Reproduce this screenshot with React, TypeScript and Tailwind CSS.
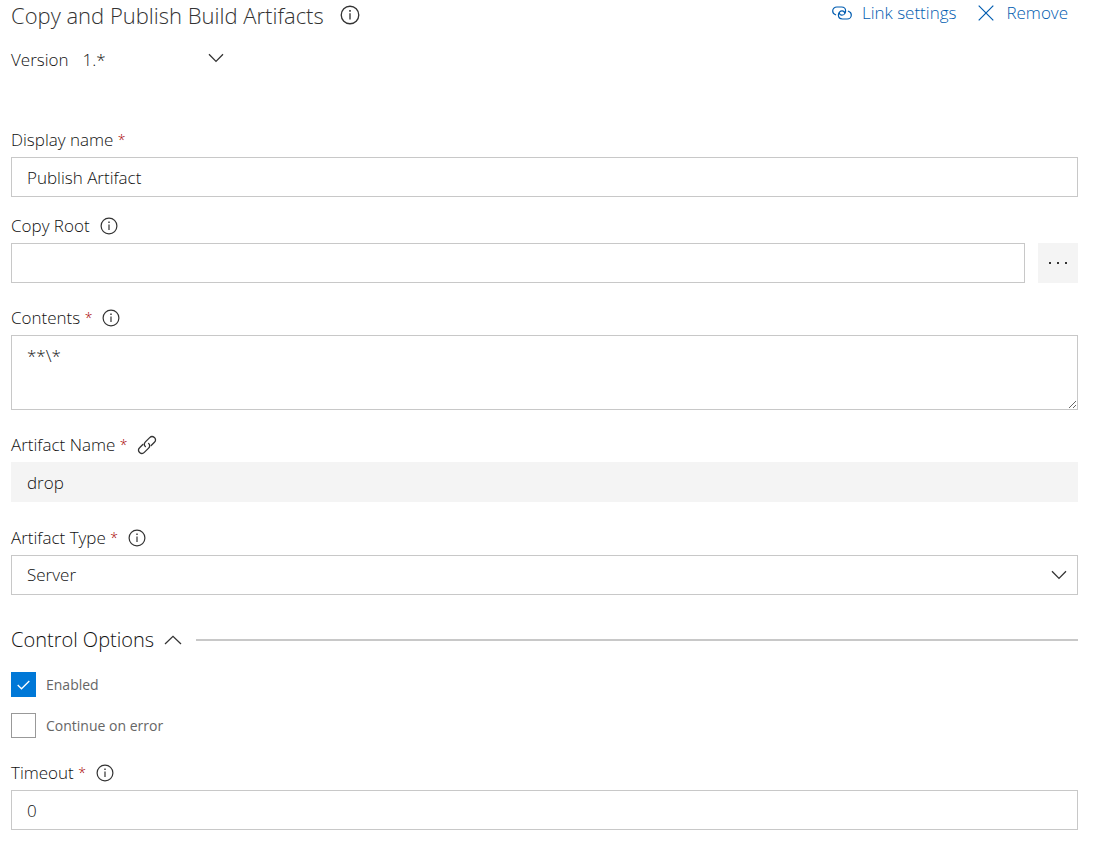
import type { ReactNode } from 'react'

const FIELD = 'block w-full h-10 border border-[#c8c8c8] bg-white px-[15px] text-[17px] leading-6 text-[#111111] outline-none focus:border-[#0078d4]'

function InfoIcon({ size = 18 }: { size?: number }) {
  return (
    <svg width={size} height={size} viewBox="0 0 18 18" fill="none" stroke="#333333" aria-hidden="true">
      <circle cx="9" cy="9" r="7.9" strokeWidth="1.2" />
      <path d="M9 7.4v5.6" strokeWidth="1.2" />
      <path d="M9 4.6v1.5" strokeWidth="1.4" />
    </svg>
  )
}

function ChainIcon() {
  return (
    <svg width="20" height="20" viewBox="0 0 20 20" fill="none" stroke="#333333" strokeWidth="1.3" strokeLinecap="round" aria-hidden="true">
      <path d="M8.4 11.6c-1.6-1.6-1.3-3.4 0-4.7l4.3-4.3c1.5-1.5 3.3-1.3 4.7 0s1.6 3.2 0 4.7l-3.2 3.2" />
      <path d="M11.6 8.4c1.6 1.6 1.3 3.4 0 4.7l-4.3 4.3c-1.5 1.5-3.3 1.3-4.7 0s-1.6-3.2 0-4.7l3.2-3.2" />
    </svg>
  )
}

function LinkSettingsIcon() {
  return (
    <svg width="20" height="14" viewBox="0 0 20 14" fill="none" stroke="currentColor" strokeWidth="1.2" strokeLinecap="round" aria-hidden="true">
      <path d="M3.6 8.8C1.8 8.2.7 6.9.7 5.1.7 2.8 2.5 1 4.9 1h4.6c2.4 0 4.1 1.7 4.1 3.9s-1.7 4.2-3.7 4.2c-1.5 0-2.5-1-2.5-2.2" />
      <path d="M16.4 5.2c1.8.6 2.9 1.9 2.9 3.7 0 2.3-1.8 4.1-4.2 4.1h-4.6c-2.4 0-4.1-1.7-4.1-3.9s1.7-4.2 3.7-4.2c1.5 0 2.5 1 2.5 2.2" />
    </svg>
  )
}

function Chevron({ up = false }: { up?: boolean }) {
  return (
    <svg width="18" height="10" viewBox="0 0 18 10" fill="none" stroke="#333333" strokeWidth="1.3" aria-hidden="true">
      <path d={up ? 'M1 9l8-7.6L17 9' : 'M2 1.2l7 7.2 7-7.2'} />
    </svg>
  )
}

type FieldProps = {
  id: string
  label: string
  required?: boolean
  info?: boolean
  linked?: boolean
  className?: string
  children: ReactNode
}

function Field({ id, label, required, info, linked, className, children }: FieldProps) {
  return (
    <div className={className}>
      <div className="mb-[5px] flex h-6 items-center">
        <label htmlFor={id} className="text-[17px] leading-6">
          {label}
          {required && <> <span className="align-[1px] text-sm leading-none text-[#a80000]">*</span></>}
        </label>
        {info && (
          <button type="button" aria-label={`About ${label}`} className="ml-[10px]">
            <InfoIcon />
          </button>
        )}
        {linked && (
          <button type="button" aria-label={`${label} is linked`} className="ml-[10px]">
            <ChainIcon />
          </button>
        )}
      </div>
      {children}
    </div>
  )
}

function Checkbox({ label, defaultChecked }: { label: string; defaultChecked?: boolean }) {
  return (
    <label className="flex w-fit items-center gap-[10px] text-sm leading-6 font-normal text-[#666666]">
      <span className="grid">
        <input
          type="checkbox"
          defaultChecked={defaultChecked}
          className="peer col-start-1 row-start-1 size-[25px] appearance-none border border-[#999999] bg-white checked:border-[#0078d7] checked:bg-[#0078d7]"
        />
        <svg className="pointer-events-none invisible col-start-1 row-start-1 place-self-center peer-checked:visible" width="13" height="10" viewBox="0 0 13 10" fill="none" stroke="#ffffff" strokeWidth="1.3" aria-hidden="true">
          <path d="M.7 5l3.8 3.8L12.3 1" />
        </svg>
      </span>
      {label}
    </label>
  )
}

export default function App() {
  return (
    <main className="bg-white pb-5 pl-[11px] pr-[25px] font-['Open_Sans','Noto_Sans',sans-serif] font-light text-[#111111]">
      <header className="flex items-start justify-between">
        <div className="flex h-[30px] items-center gap-4">
          <h1 className="text-[22px] leading-[30px] text-[#333333]">Copy and Publish Build Artifacts</h1>
          <button type="button" aria-label="About this task">
            <InfoIcon size={20} />
          </button>
        </div>
        <div className="flex h-[26px] items-center gap-[22px] pr-[10px] text-[17px] leading-6 text-[#005cb0]">
          <a href="#link-settings" className="flex items-center gap-[10px]">
            <LinkSettingsIcon />
            Link settings
          </a>
          <button type="button" className="flex items-center gap-3">
            <svg width="16" height="16" viewBox="0 0 16 16" fill="none" stroke="currentColor" strokeWidth="1.2" aria-hidden="true">
              <path d="M.7.7l14.6 14.6M15.3.7L.7 15.3" />
            </svg>
            Remove
          </button>
        </div>
      </header>

      <div className="mt-[18px] flex h-6 items-center gap-[14px] text-[17px] leading-6">
        <label htmlFor="version">Version</label>
        <div className="grid w-[142px] items-center">
          <select id="version" className="col-start-1 row-start-1 appearance-none bg-transparent outline-none">
            <option>1.*</option>
          </select>
          <span className="pointer-events-none col-start-1 row-start-1 mb-1 justify-self-end">
            <Chevron />
          </span>
        </div>
      </div>

      <Field id="display-name" label="Display name" required className="mt-14">
        <input id="display-name" type="text" defaultValue="Publish Artifact" className={FIELD} />
      </Field>

      <Field id="copy-root" label="Copy Root" info className="mt-[17px]">
        <div className="flex gap-[13px]">
          <input id="copy-root" type="text" className={FIELD} />
          <button type="button" aria-label="Browse" className="flex size-10 shrink-0 items-center justify-center bg-[#f4f4f4]">
            <svg width="20" height="4" viewBox="0 0 20 4" fill="#333333" aria-hidden="true">
              <path d="M1 1h2v2H1zM9 1h2v2H9zM17 1h2v2h-2z" />
            </svg>
          </button>
        </div>
      </Field>

      <Field id="contents" label="Contents" required info className="mt-[23px]">
        <textarea
          id="contents"
          defaultValue={'**\\*'}
          className="block h-[75px] w-full resize-y border border-[#c8c8c8] bg-white px-[15px] py-2 text-[17px] leading-6 outline-none focus:border-[#0078d4]"
        />
      </Field>

      <Field id="artifact-name" label="Artifact Name" required linked className="mt-[23px]">
        <input
          id="artifact-name"
          type="text"
          readOnly
          value="drop"
          className="block h-10 w-full bg-[#f4f4f4] px-4 text-[17px] leading-6 outline-none"
        />
      </Field>

      <Field id="artifact-type" label="Artifact Type" required info className="mt-6">
        <div className="grid items-center">
          <select id="artifact-type" defaultValue="Server" className={`${FIELD} col-start-1 row-start-1 appearance-none`}>
            <option>Server</option>
            <option>File share</option>
          </select>
          <span className="pointer-events-none col-start-1 row-start-1 mr-[10px] justify-self-end">
            <Chevron />
          </span>
        </div>
      </Field>

      <section className="mt-[33px]">
        <div className="flex h-6 items-center">
          <h2>
            <button type="button" aria-expanded="true" className="flex items-center gap-[10px] text-xl leading-6">
              Control Options
              <Chevron up />
            </button>
          </h2>
          <div className="ml-[14px] h-0.5 flex-1 bg-[#c8c8c8]" />
        </div>
        <div className="mt-5 flex flex-col gap-4">
          <Checkbox label="Enabled" defaultChecked />
          <Checkbox label="Continue on error" />
        </div>
        <Field id="timeout" label="Timeout" required info className="mt-[23px]">
          <input id="timeout" type="text" inputMode="numeric" defaultValue="0" className={FIELD} />
        </Field>
      </section>
    </main>
  )
}
